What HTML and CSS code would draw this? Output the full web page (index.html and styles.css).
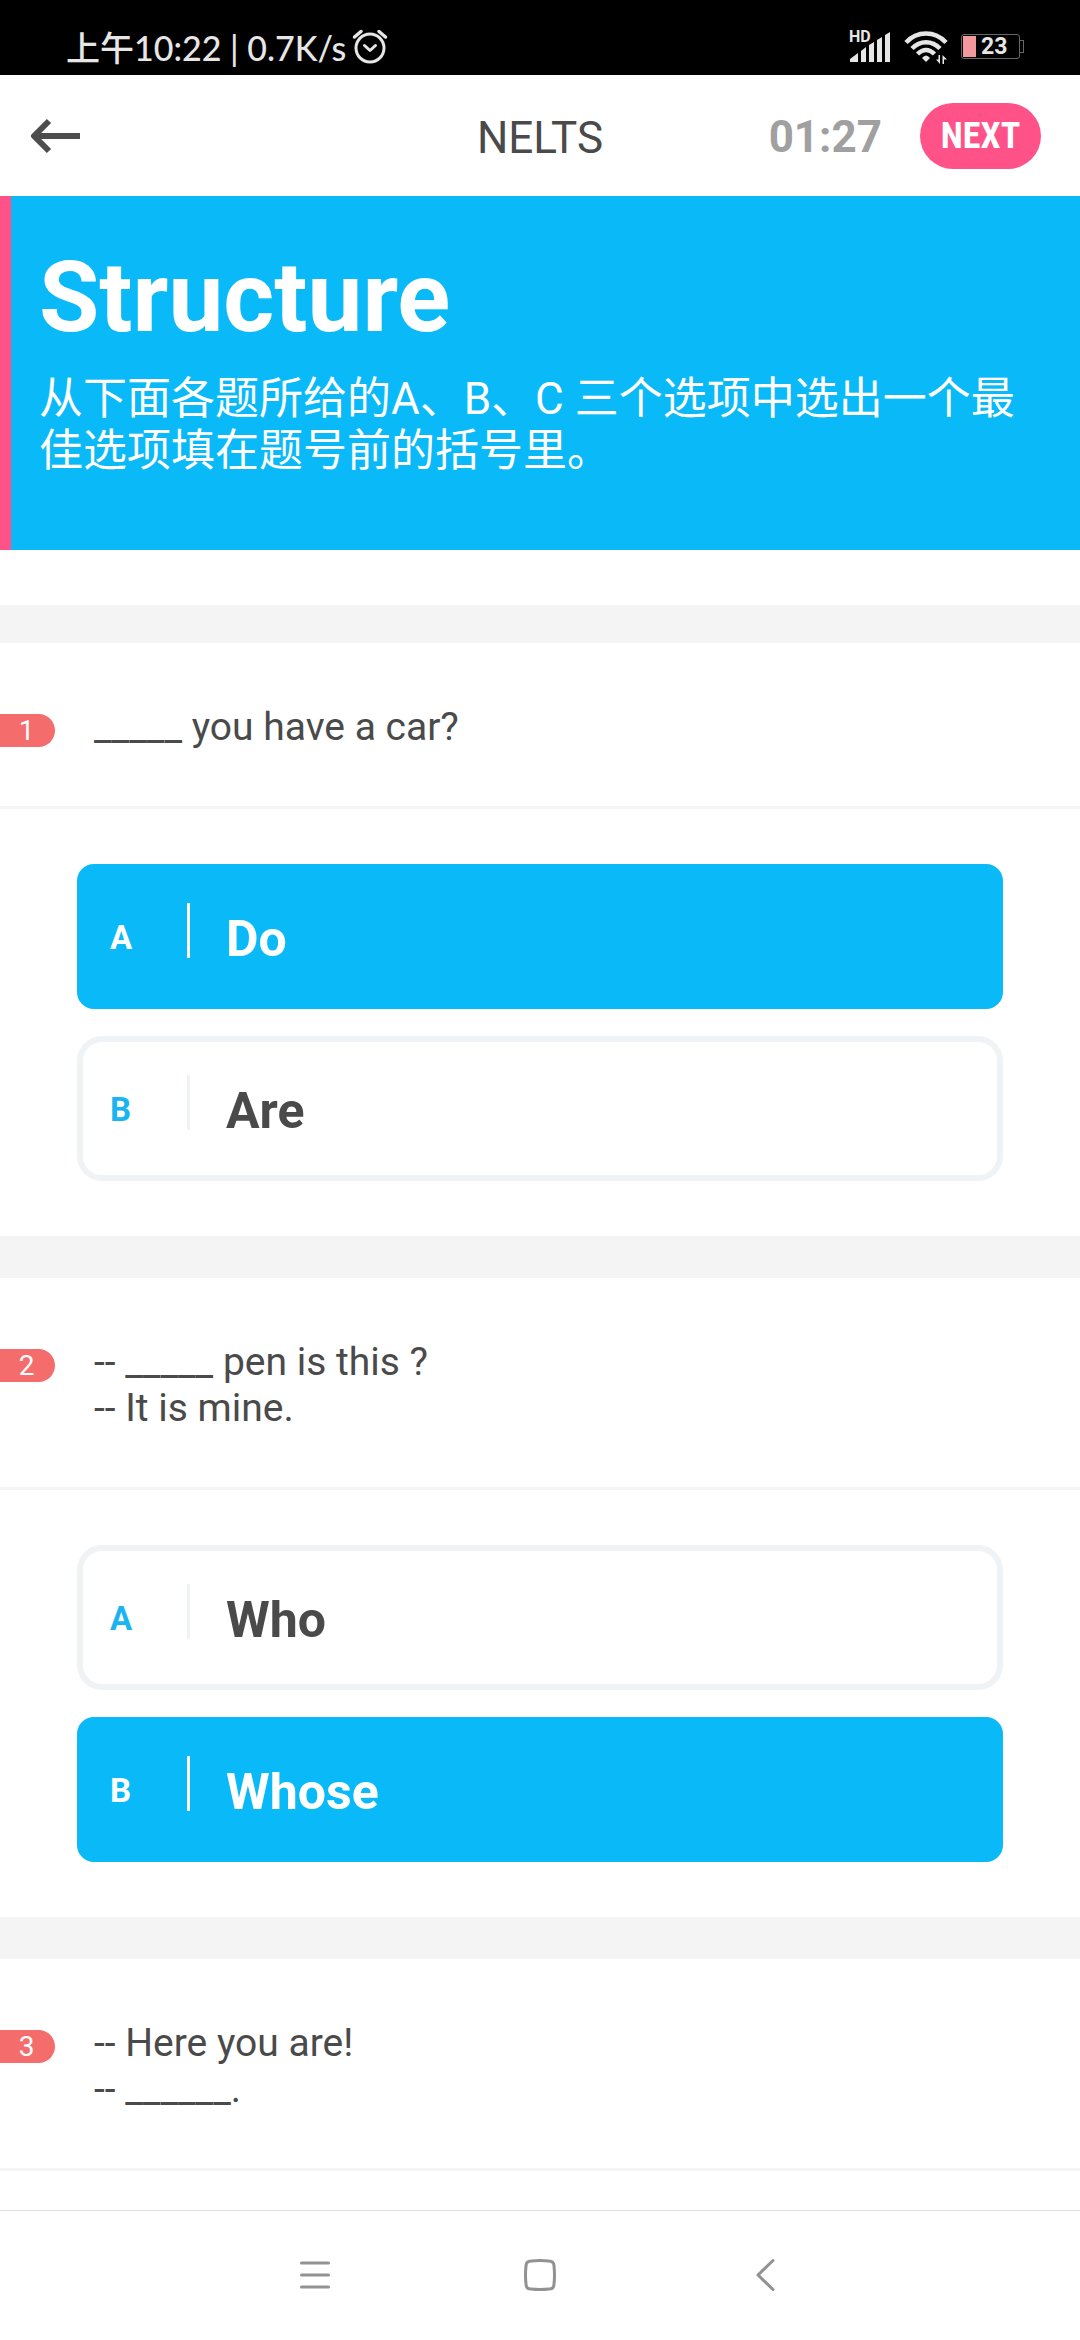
FILE: index.html
```html
<!DOCTYPE html>
<html lang="zh-CN">

<head>
    <meta charset="UTF-8">
    <meta name="viewport" content="width=device-width, initial-scale=1.0">
    <title>NELTS</title>
    <link rel="stylesheet" href="styles.css">
</head>

<body>
    <div class="status-bar">
        <div class="status-left">
            <span>上午10:22 | 0.7K/s</span>
            <svg class="alarm" width="36" height="36" viewBox="0 0 36 36" fill="none" stroke="#e6e6e6" stroke-linecap="round" stroke-linejoin="round">
                <circle cx="18" cy="20" r="14" stroke-width="3" />
                <path d="M12.500 17.500L18 22.500L23.500 17.500" stroke-width="3" />
                <path d="M2.500 9L9 3.500M33.500 9L27 3.500" stroke-width="3.500" />
            </svg>
        </div>
        <div class="status-right">
            <div class="signal">
                <span class="hd">HD</span>
                <svg width="42" height="31" viewBox="0 0 42 31" fill="#e6e6e6">
                    <path d="M1 31V28L9 22V31ZM12 31V20L17 16V31ZM20 31V14L25 11V31ZM28 31V9L33 6V31ZM36 31V4L41 1V31Z" />
                </svg>
            </div>
            <svg width="44" height="34" viewBox="0 0 44 34">
                <g fill="none" stroke="#e6e6e6" stroke-width="4.500">
                    <path d="M2 12.500C13 0.500 31 0.500 42 12.500" />
                    <path d="M8 18.500C16 10 28 10 36 18.500" />
                    <path d="M13.500 24C19 18.500 25 18.500 30.500 24" />
                </g>
                <path d="M22 32L18 28Q22 23 26 28Z" fill="#e6e6e6" />
                <path d="M36 25V34L32 29.500H34.500V25ZM38.500 34V25L43 29.500H40V34Z" fill="#e6e6e6" />
            </svg>
            <div class="battery">
                <div class="battery-body">
                    <span class="battery-level"></span>
                    <span>23</span>
                </div>
                <span class="battery-tip"></span>
            </div>
        </div>
    </div>

    <header class="header">
        <button class="back" type="button" aria-label="Back">
            <svg width="50" height="36" viewBox="0 0 50 36" fill="none" stroke="#4d4d4d" stroke-width="6">
                <path d="M4 18H50M19 3L4 18L19 33" stroke-linejoin="round" />
            </svg>
        </button>
        <h1 class="title">NELTS</h1>
        <div class="header-right">
            <span class="timer">01:27</span>
            <button class="next" type="button">NEXT</button>
        </div>
    </header>

    <main class="content">
        <section class="intro">
            <h2>Structure</h2>
            <p>从下面各题所给的A、B、C 三个选项中选出一个最佳选项填在题号前的括号里。</p>
        </section>

        <section class="question">
            <div class="question-head">
                <span class="number">1</span>
                <p>_____ you have a car?</p>
            </div>
            <div class="options">
                <label class="option">
                    <input type="radio" name="q1" checked>
                    <span class="letter">A</span>
                    <span class="divider"></span>
                    <span class="answer">Do</span>
                </label>
                <label class="option">
                    <input type="radio" name="q1">
                    <span class="letter">B</span>
                    <span class="divider"></span>
                    <span class="answer">Are</span>
                </label>
            </div>
        </section>

        <section class="question">
            <div class="question-head">
                <span class="number">2</span>
                <p>-- _____ pen is this ?<br>-- It is mine.</p>
            </div>
            <div class="options">
                <label class="option">
                    <input type="radio" name="q2">
                    <span class="letter">A</span>
                    <span class="divider"></span>
                    <span class="answer">Who</span>
                </label>
                <label class="option">
                    <input type="radio" name="q2" checked>
                    <span class="letter">B</span>
                    <span class="divider"></span>
                    <span class="answer">Whose</span>
                </label>
            </div>
        </section>

        <section class="question">
            <div class="question-head">
                <span class="number">3</span>
                <p>-- Here you are!<br>-- ______.</p>
            </div>
        </section>
    </main>

    <nav class="nav-bar">
        <button type="button" aria-label="Recent apps">
            <svg width="34" height="34" viewBox="0 0 34 34" fill="none" stroke="#929292" stroke-width="3" stroke-linecap="round">
                <path d="M3.500 5H30.500M3.500 17H30.500M3.500 29H30.500" />
            </svg>
        </button>
        <button type="button" aria-label="Home">
            <svg width="34" height="34" viewBox="0 0 34 34" fill="none" stroke="#929292" stroke-width="3">
                <path d="M8 3Q17 2 26 3Q31 3 31 8Q32 17 31 26Q31 31 26 31Q17 32 8 31Q3 31 3 26Q2 17 3 8Q3 3 8 3Z" />
            </svg>
        </button>
        <button type="button" aria-label="Back">
            <svg width="34" height="34" viewBox="0 0 34 34" fill="none" stroke="#929292" stroke-width="3" stroke-linecap="round" stroke-linejoin="round">
                <path d="M25 2.500L10 17L25 31.500" />
            </svg>
        </button>
    </nav>
</body>

</html>
```
FILE: styles.css
```css
* {
    box-sizing: border-box;
}

body {
    margin: 0;
    height: 100vh;
    display: flex;
    flex-direction: column;
    background-color: #fff;
    color: #4a4a4a;
    font-family: Roboto, "Noto Sans CJK SC", sans-serif;
}

h1,
h2,
p {
    margin: 0;
    font-weight: normal;
}

button {
    border: none;
    padding: 0;
    background: none;
    font-family: inherit;
    cursor: pointer;
}

svg {
    display: block;
}

/* Status bar */
.status-bar {
    flex: none;
    display: flex;
    justify-content: space-between;
    height: 75px;
    padding: 18px 56px 0 66px;
    background-color: #000;
    color: #e6e6e6;
}

.status-left {
    display: flex;
    align-items: center;
    gap: 6px;
    font-family: Lato, "Noto Sans CJK SC", sans-serif;
    font-size: 34px;
    font-weight: 500;
}

.alarm {
    margin-bottom: 2px;
}

.status-right {
    display: flex;
    align-items: center;
    gap: 13px;
}

.signal {
    position: relative;
}

.hd {
    position: absolute;
    top: -2px;
    left: 0;
    font-size: 16px;
    line-height: 16px;
    font-weight: bold;
}

.battery {
    display: flex;
    align-items: center;
}

.battery-body {
    display: flex;
    align-items: center;
    gap: 5px;
    width: 59px;
    height: 25px;
    padding: 1px;
    border: 1px solid #666;
    border-radius: 3px;
    font-size: 23px;
    font-weight: bold;
}

.battery-level {
    width: 13px;
    height: 21px;
    background-color: #f2979c;
}

.battery-tip {
    width: 4px;
    height: 13px;
    border: 1px solid #666;
    border-left: none;
}

/* Header */
.header {
    flex: none;
    display: grid;
    grid-template-columns: 1fr auto 1fr;
    align-items: center;
    height: 121px;
}

.back {
    justify-self: start;
    padding-left: 30px;
}

.title {
    padding-top: 4px;
    font-size: 44px;
}

.header-right {
    display: flex;
    justify-content: flex-end;
    align-items: center;
    gap: 38px;
    padding-right: 39px;
}

.timer {
    padding-top: 3px;
    font-size: 44px;
    font-weight: bold;
    color: #a0a0a0;
}

.next {
    width: 121px;
    height: 66px;
    border-radius: 33px;
    background-color: #ff5289;
    color: #fff;
    font-family: "Roboto Condensed", Roboto, sans-serif;
    font-size: 36px;
    font-weight: bold;
}

/* Content */
.content {
    flex: 1;
    min-height: 0;
    overflow-y: auto;
}

.intro {
    margin-bottom: 55px;
    padding: 44px 40px 73px 28px;
    border-left: 11px solid #ff5289;
    background-color: #0ab9f7;
    color: #fff;
}

.intro h2 {
    margin-bottom: 17px;
    font-size: 98px;
    line-height: 116px;
    font-weight: bold;
}

.intro p {
    font-size: 44px;
    line-height: 52px;
}

.question {
    border-top: 42px solid #f4f4f4;
}

.intro + .question {
    border-top-width: 38px;
}

.question-head {
    display: flex;
    align-items: flex-start;
    gap: 39px;
    padding: 61px 40px 56px 0;
    border-bottom: 3px solid #f4f4f4;
    font-size: 39px;
    line-height: 46px;
}

.number {
    width: 55px;
    height: 33px;
    margin-top: 10px;
    padding-right: 2px;
    border-radius: 0 17px 17px 0;
    background-color: #f56c6c;
    color: #fff;
    font-size: 28px;
    line-height: 34px;
    text-align: center;
}

.options {
    display: flex;
    flex-direction: column;
    gap: 27px;
    padding: 55px 77px;
}

.option {
    display: flex;
    align-items: center;
    height: 145px;
    padding: 4px 27px 0;
    border: 6px solid #eff3f6;
    border-radius: 25px;
    cursor: pointer;
}

.option input {
    position: absolute;
    opacity: 0;
}

.letter {
    width: 77px;
    margin-bottom: 3px;
    color: #1ab4f0;
    font-size: 33px;
    font-weight: bold;
}

.divider {
    width: 3px;
    height: 55px;
    margin: 0 36px 16px 0;
    background-color: #eff3f6;
}

.answer {
    font-size: 50px;
    font-weight: bold;
}

.option:has(input:checked) {
    border-color: #0ab9f7;
    border-radius: 17px;
    background-color: #0ab9f7;
    color: #fff;
}

.option:has(input:checked) .letter {
    color: #fff;
}

.option:has(input:checked) .divider {
    background-color: #fff;
}

/* System navigation */
.nav-bar {
    flex: none;
    display: flex;
    justify-content: center;
    height: 130px;
    padding-bottom: 2px;
    border-top: 1px solid #e2e2e2;
}

.nav-bar button {
    display: flex;
    justify-content: center;
    align-items: center;
    width: 225px;
}
```
